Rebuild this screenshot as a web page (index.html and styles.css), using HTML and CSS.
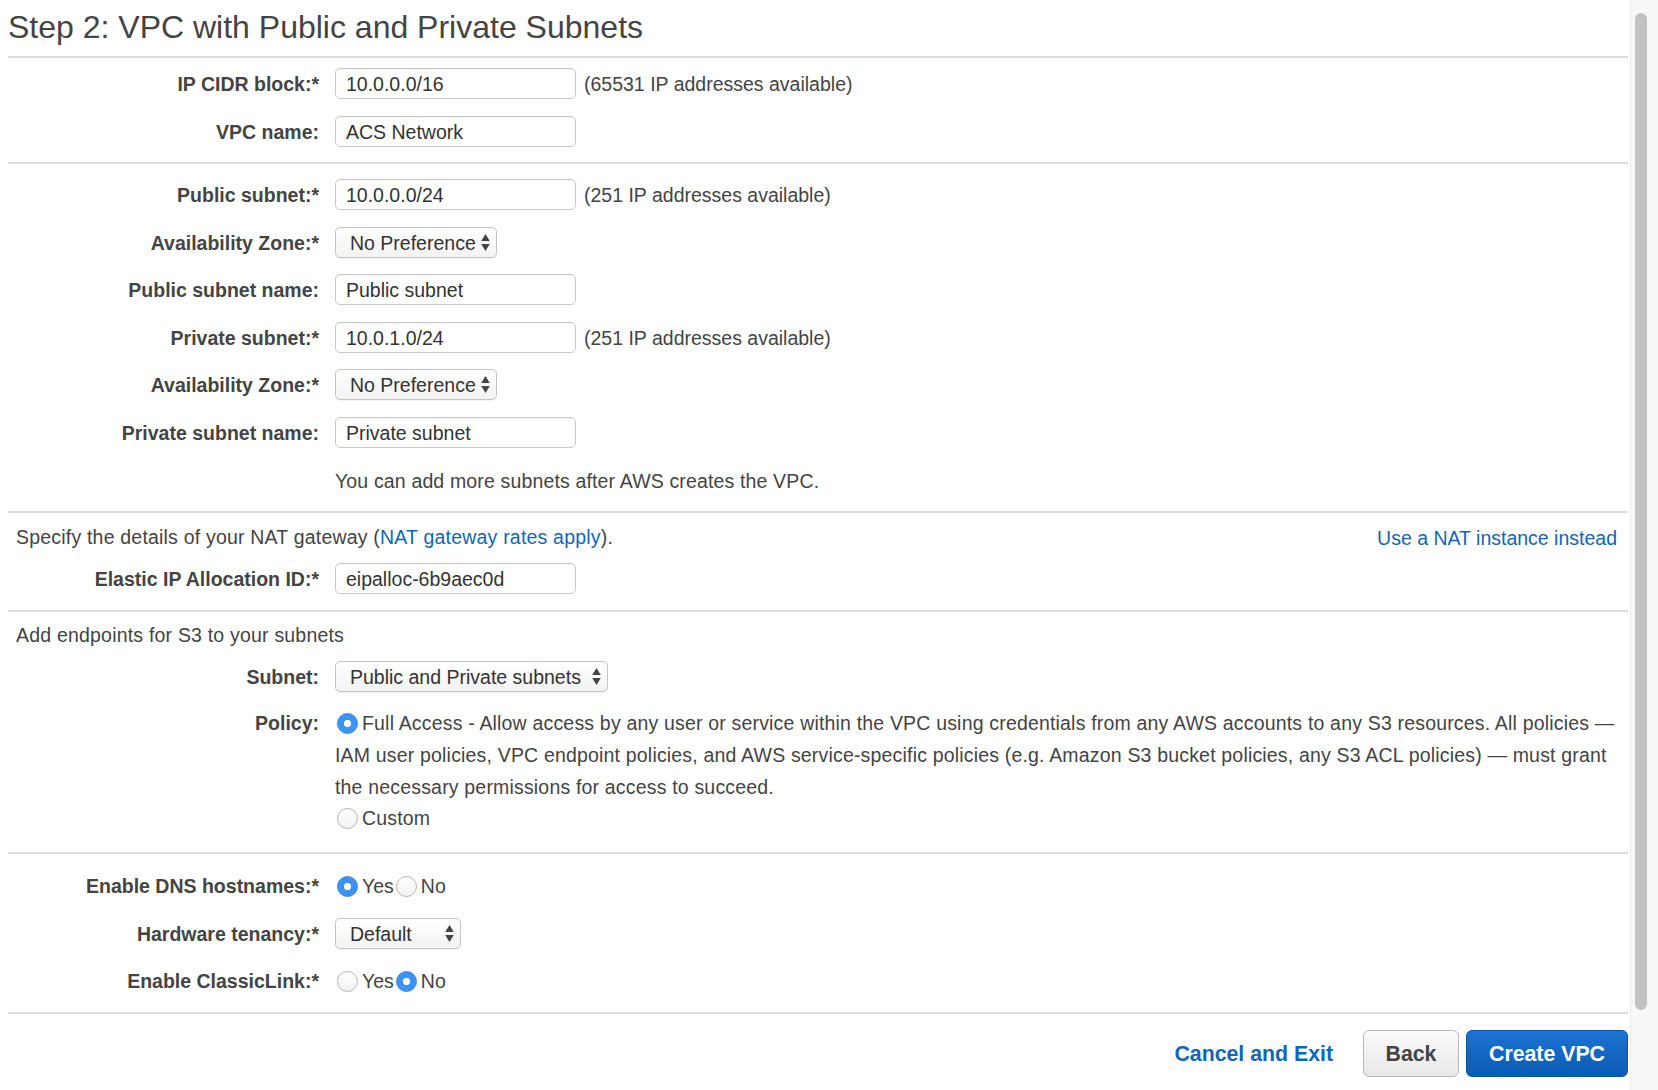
FILE: index.html
```html
<!DOCTYPE html>
<html lang="en">
<head>
<meta charset="utf-8">
<title>Step 2: VPC with Public and Private Subnets</title>
<link rel="stylesheet" href="styles.css">
</head>
<body>
<div class="page">
  <main class="main">
    <h1 class="title">Step 2: VPC with Public and Private Subnets</h1>

    <section class="sec sec-vpc">
      <div class="rows">
        <div class="row"><span class="lbl">IP CIDR block:*</span><div class="ctl"><span class="input">10.0.0.0/16</span><span class="hint">(65531 IP addresses available)</span></div></div>
        <div class="row"><span class="lbl">VPC name:</span><div class="ctl"><span class="input">ACS Network</span></div></div>
      </div>
    </section>

    <section class="sec sec-subnets">
      <div class="rows rows-wide">
        <div class="row"><span class="lbl">Public subnet:*</span><div class="ctl"><span class="input">10.0.0.0/24</span><span class="hint">(251 IP addresses available)</span></div></div>
        <div class="row"><span class="lbl">Availability Zone:*</span><div class="ctl"><span class="select sel-az"><span class="sel-text">No Preference</span><svg viewBox="0 0 8 16"><path d="M0 6.5 L4 0 L8 6.5 Z M0 9.5 L8 9.5 L4 16 Z"/></svg></span></div></div>
        <div class="row"><span class="lbl">Public subnet name:</span><div class="ctl"><span class="input">Public subnet</span></div></div>
        <div class="row"><span class="lbl">Private subnet:*</span><div class="ctl"><span class="input">10.0.1.0/24</span><span class="hint">(251 IP addresses available)</span></div></div>
        <div class="row"><span class="lbl">Availability Zone:*</span><div class="ctl"><span class="select sel-az"><span class="sel-text">No Preference</span><svg viewBox="0 0 8 16"><path d="M0 6.5 L4 0 L8 6.5 Z M0 9.5 L8 9.5 L4 16 Z"/></svg></span></div></div>
        <div class="row"><span class="lbl">Private subnet name:</span><div class="ctl"><span class="input">Private subnet</span></div></div>
        <div class="row"><span class="lbl"></span><div class="ctl"><span class="note">You can add more subnets after AWS creates the VPC.</span></div></div>
      </div>
    </section>

    <section class="sec sec-nat">
      <div class="intro"><span class="intro-text">Specify the details of your NAT gateway (<a class="link" href="#">NAT gateway rates apply</a>).</span><a class="link link-right" href="#">Use a NAT instance instead</a></div>
      <div class="row row-after-intro"><span class="lbl">Elastic IP Allocation ID:*</span><div class="ctl"><span class="input">eipalloc-6b9aec0d</span></div></div>
    </section>

    <section class="sec sec-s3">
      <div class="intro"><span class="intro-text">Add endpoints for S3 to your subnets</span></div>
      <div class="row row-after-intro"><span class="lbl">Subnet:</span><div class="ctl"><span class="select sel-subnet"><span class="sel-text">Public and Private subnets</span><svg viewBox="0 0 8 16"><path d="M0 6.5 L4 0 L8 6.5 Z M0 9.5 L8 9.5 L4 16 Z"/></svg></span></div></div>
      <div class="row-policy">
        <span class="lbl">Policy:</span>
        <div class="policy">
          <span class="pline"><span class="radio on"></span>Full Access - Allow access by any user or service within the VPC using credentials from any AWS accounts to any S3 resources. All policies —</span>
          <span class="pline">IAM user policies, VPC endpoint policies, and AWS service-specific policies (e.g. Amazon S3 bucket policies, any S3 ACL policies) — must grant</span>
          <span class="pline">the necessary permissions for access to succeed.</span>
          <span class="pline"><span class="radio"></span>Custom</span>
        </div>
      </div>
    </section>

    <section class="sec sec-opts">
      <div class="rows">
        <div class="row"><span class="lbl">Enable DNS hostnames:*</span><div class="ctl ctl-radios"><span class="radio on"></span><span class="opt">Yes</span><span class="radio"></span><span class="opt">No</span></div></div>
        <div class="row"><span class="lbl">Hardware tenancy:*</span><div class="ctl"><span class="select sel-default"><span class="sel-text">Default</span><svg viewBox="0 0 8 16"><path d="M0 6.5 L4 0 L8 6.5 Z M0 9.5 L8 9.5 L4 16 Z"/></svg></span></div></div>
        <div class="row"><span class="lbl">Enable ClassicLink:*</span><div class="ctl ctl-radios"><span class="radio"></span><span class="opt">Yes</span><span class="radio on"></span><span class="opt">No</span></div></div>
      </div>
    </section>

    <footer class="footer">
      <a class="cancel" href="#">Cancel and Exit</a>
      <span class="btn btn-back">Back</span>
      <span class="btn btn-create">Create VPC</span>
    </footer>
  </main>
  <div class="scrollbar"><div class="thumb"></div></div>
</div>
</body>
</html>
```
FILE: styles.css
```css
html, body {
  margin: 0;
  padding: 0;
  background: #fff;
}

body {
  font-family: "Liberation Sans", Arial, Helvetica, sans-serif;
  font-size: 19.5px;
  color: #444;
}

.page {
  display: flex;
  height: 1090px;
  overflow: hidden;
}

.main {
  flex: none;
  width: 1620px;
  margin-left: 8px;
}

.title {
  box-sizing: border-box;
  margin: 0;
  height: 56px;
  padding-top: 1px;
  font-size: 32px;
  font-weight: normal;
  line-height: 52px;
  color: #444;
  white-space: nowrap;
}

.sec {
  border-top: 2px solid #dddddd;
}

.sec-vpc {
  padding: 10px 0 15.5px;
}

.sec-subnets {
  padding: 15px 0 15.5px;
}

.sec-nat {
  padding: 7.5px 0 16.5px;
}

.sec-s3 {
  padding: 6.5px 0 18px;
}

.sec-opts {
  padding: 16.5px 0 15.5px;
}

.rows {
  display: flex;
  flex-direction: column;
  gap: 16.5px;
}

.rows-wide {
  gap: 16.6px;
}

.row {
  display: grid;
  grid-template-columns: 311px auto;
  column-gap: 16px;
  align-items: center;
  height: 31px;
}

.row-after-intro {
  margin-top: 11px;
}

.lbl {
  padding-top: 2px;
  text-align: right;
  font-weight: bold;
  white-space: nowrap;
}

.ctl {
  display: flex;
  align-items: center;
  gap: 8px;
  white-space: nowrap;
}

.input {
  box-sizing: border-box;
  display: flex;
  align-items: center;
  width: 241px;
  height: 31px;
  padding: 2px 10px 0;
  border: 1px solid #c8c8c8;
  border-radius: 5px;
  background: #fff;
  box-shadow: inset 0 1px 1px rgba(0, 0, 0, 0.05);
  color: #333;
}

.hint {
  padding-top: 2px;
  color: #444;
}

.note {
  padding-top: 2px;
  color: #444;
  letter-spacing: 0.15px;
}

.select {
  box-sizing: border-box;
  display: flex;
  align-items: center;
  justify-content: space-between;
  height: 31px;
  padding: 0 6px 0 14px;
  border: 1px solid #c4c4c4;
  border-radius: 5px;
  background: linear-gradient(#ffffff, #f3f3f3);
  box-shadow: 0 1px 1px rgba(0, 0, 0, 0.05);
  color: #333;
}

.sel-text {
  padding-top: 2px;
}

.select svg {
  width: 9px;
  height: 17px;
  fill: #444;
}

.sel-az {
  width: 162px;
}

.sel-subnet {
  width: 273px;
}

.sel-default {
  width: 126px;
}

.intro {
  display: flex;
  justify-content: space-between;
  align-items: center;
  height: 31px;
  padding: 0 11px 0 8px;
  white-space: nowrap;
}

.intro-text {
  padding-top: 2px;
  letter-spacing: 0.2px;
}

.link {
  color: #1166bb;
  text-decoration: none;
}

.link-right {
  padding-top: 4px;
}

.row-policy {
  display: grid;
  grid-template-columns: 311px auto;
  column-gap: 16px;
  align-items: start;
  margin-top: 16.7px;
  margin-bottom: -1px;
  line-height: 31.67px;
}

.row-policy .lbl {
  padding-top: 0;
}

.policy {
  display: flex;
  flex-direction: column;
  letter-spacing: 0.18px;
}

.pline {
  display: block;
  white-space: nowrap;
  height: 31.67px;
}

.radio {
  box-sizing: border-box;
  display: inline-block;
  width: 21px;
  height: 21px;
  margin: 0 4px 0 2px;
  border: 1px solid #b4b4b4;
  border-radius: 50%;
  background: linear-gradient(#ffffff, #f2f2f2);
  vertical-align: -4px;
}

.radio.on {
  border-color: #3587ea;
  background: radial-gradient(circle, #ffffff 0 3.3px, #3d93f5 4px);
}

.ctl-radios {
  gap: 0;
}

.ctl-radios .radio {
  margin-top: 1px;
}

.opt {
  padding-top: 2px;
}

.footer {
  display: flex;
  justify-content: flex-end;
  align-items: center;
  padding-top: 16px;
  border-top: 2px solid #dddddd;
}

.cancel {
  margin-right: 30px;
  padding-top: 2px;
  font-size: 21.3px;
  font-weight: bold;
  color: #1166bb;
  text-decoration: none;
}

.btn {
  box-sizing: border-box;
  display: flex;
  align-items: center;
  justify-content: center;
  height: 47px;
  padding-top: 2px;
  border-radius: 6px;
  font-size: 21.3px;
  font-weight: bold;
}

.btn-back {
  width: 96px;
  border: 1px solid #b9b9b9;
  background: linear-gradient(#fbfbfb, #e7e7e7);
  color: #444;
}

.btn-create {
  width: 162px;
  margin-left: 7px;
  border: 1px solid #0b55a6;
  background: linear-gradient(#1c73d3, #0a5bb2);
  color: #fff;
}

.scrollbar {
  flex: none;
  box-sizing: border-box;
  width: 28px;
  margin-left: 2px;
  padding-top: 13px;
  border-left: 1px solid #ebebeb;
  background: #f7f7f7;
}

.thumb {
  width: 12px;
  height: 997px;
  margin-left: 4px;
  border-radius: 6px;
  background: #c2c2c2;
}
```
